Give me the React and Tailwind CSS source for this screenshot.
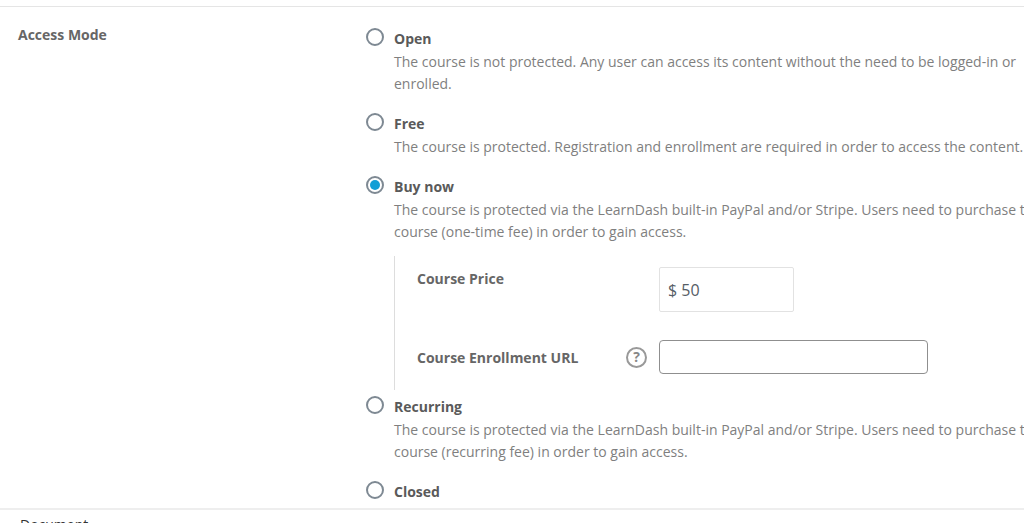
import { useState } from "react";

function Option({ id, title, lines, value, onSelect, children }) {
  return (
    <div className="flex flex-col">
      <div className="flex h-[23px] items-center gap-[10px]">
        <input
          id={id}
          type="radio"
          name="access-mode"
          checked={value === id}
          onChange={() => onSelect(id)}
          aria-describedby={lines ? id + "-text" : undefined}
          className="mb-[3px] size-[18px] shrink-0 appearance-none rounded-full border-2 border-[#7e8993] bg-white bg-clip-content p-[2px] checked:bg-[#129fd6]"
        />
        <label htmlFor={id} className="font-bold text-[#5a5a5a]">
          {title}
        </label>
      </div>
      {lines && (
        <p id={id + "-text"} className="pt-px pl-7 leading-[22px] whitespace-nowrap text-[#7f7f7f]">
          {lines[0]} {lines[1] && <span className="block">{lines[1]}</span>}
        </p>
      )}
      {children}
    </div>
  );
}

export default function App() {
  const [mode, setMode] = useState("buy-now");
  const [price, setPrice] = useState("$ 50");
  const [url, setUrl] = useState("");

  return (
    <main className="h-screen overflow-hidden bg-white pt-[6px] font-['Open_Sans','Noto_Sans',sans-serif] text-[14px] leading-[23px]">
      <fieldset
        aria-labelledby="access-mode-title"
        className="flex border-t border-b-2 border-t-[#e5e5e5] border-b-[#eeeeee] pb-[5px]"
      >
        <h2 id="access-mode-title" className="w-[366px] shrink-0 pt-4 pl-[18px] font-bold text-[#666666]">
          Access Mode
        </h2>
        <div className="flex min-w-0 flex-1 flex-col gap-[17px] pt-5">
          <Option
            id="open"
            title="Open"
            value={mode}
            onSelect={setMode}
            lines={[
              "The course is not protected. Any user can access its content without the need to be logged-in or",
              "enrolled.",
            ]}
          />
          <Option
            id="free"
            title="Free"
            value={mode}
            onSelect={setMode}
            lines={[
              "The course is protected. Registration and enrollment are required in order to access the content.",
            ]}
          />
          <div className="flex flex-col gap-[5px]">
            <Option
              id="buy-now"
              title="Buy now"
              value={mode}
              onSelect={setMode}
              lines={[
                "The course is protected via the LearnDash built-in PayPal and/or Stripe. Users need to purchase the",
                "course (one-time fee) in order to gain access.",
              ]}
            >
              <div className="mt-[13px] ml-7 flex flex-col gap-7 border-l border-[#dddddd] pt-[11px] pb-4 pl-[22px]">
                <div className="flex items-start">
                  <label htmlFor="price" className="w-[242px] shrink-0 font-bold text-[#666666]">
                    Course Price
                  </label>
                  <input
                    id="price"
                    type="text"
                    value={price}
                    onChange={(e) => setPrice(e.target.value)}
                    className="h-[45px] w-[135px] rounded-xs border border-[#e2e2e2] px-2 text-base text-[#555d66]"
                  />
                </div>
                <div className="flex items-center">
                  <div className="flex w-[242px] shrink-0 items-center justify-between pr-3">
                    <label htmlFor="url" className="font-bold text-[#666666]">
                      Course Enrollment URL
                    </label>
                    <button
                      type="button"
                      aria-label="Help"
                      className="flex size-[21px] items-center justify-center rounded-full border-2 border-[#999999] text-[14px] leading-none font-bold text-[#888888]"
                    >
                      ?
                    </button>
                  </div>
                  <input
                    id="url"
                    type="text"
                    value={url}
                    onChange={(e) => setUrl(e.target.value)}
                    className="h-[34px] w-[269px] rounded border border-[#8f8f8f] px-2"
                  />
                </div>
              </div>
            </Option>
            <Option
              id="recurring"
              title="Recurring"
              value={mode}
              onSelect={setMode}
              lines={[
                "The course is protected via the LearnDash built-in PayPal and/or Stripe. Users need to purchase the",
                "course (recurring fee) in order to gain access.",
              ]}
            />
          </div>
          <Option id="closed" title="Closed" value={mode} onSelect={setMode} />
        </div>
      </fieldset>
      <h2 className="pt-[3px] pl-5 text-[#333333]">Document</h2>
    </main>
  );
}
